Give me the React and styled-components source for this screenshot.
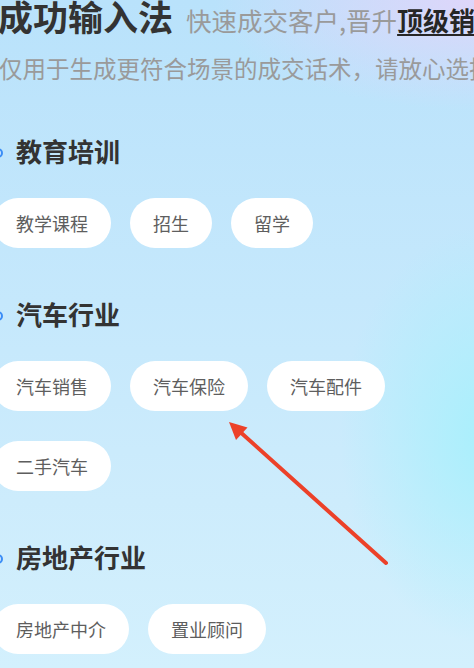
import React from "react";
import styled, { createGlobalStyle } from "styled-components";

const Global = createGlobalStyle`
  html, body { margin: 0; padding: 0; }
  body {
    font-family: "Noto Sans CJK SC", "Noto Sans", sans-serif;
    overflow: hidden;
  }
`;

const Page = styled.div`
  position: relative;
  width: 474px;
  height: 668px;
  overflow: hidden;
  background:
    radial-gradient(ellipse 150px 210px at 490px 435px, rgba(166, 240, 252, 0.95), rgba(166, 240, 252, 0) 100%),
    radial-gradient(ellipse 260px 110px at 474px 0px, rgba(222, 214, 250, 1), rgba(222, 214, 250, 0) 100%),
    linear-gradient(180deg, #b9e2fb 0%, #c5e8fc 45%, #cdecfc 75%, #d3f0fd 100%);
`;

const Header = styled.header`
  margin-left: -2px;
  white-space: nowrap;
`;

const TitleRow = styled.div`
  display: flex;
  align-items: baseline;
  white-space: nowrap;
`;

const Title = styled.h1`
  margin: 0;
  font-size: 35px;
  line-height: 32px;
  font-weight: 700;
  color: #333333;
  flex: none;
`;

const Slogan = styled.span`
  margin-left: 13px;
  font-size: 25.5px;
  line-height: 32px;
  color: #9a9a9a;
  flex: none;
`;

const Highlight = styled.span`
  font-size: 26px;
  line-height: 32px;
  font-weight: 700;
  color: #262626;
  text-decoration: underline;
  text-decoration-thickness: 2px;
  text-underline-offset: 3px;
  flex: none;
`;

const Subline = styled.p`
  margin: 17px 0 0 1px;
  font-size: 23.5px;
  line-height: 30px;
  color: #9a9a9a;
  white-space: nowrap;
`;

const Sections = styled.main`
  margin: 53px 0 0 -7px;
  display: flex;
  flex-direction: column;
  gap: 51px;
`;

const Section = styled.section`
  display: flex;
  flex-direction: column;
  gap: 32px;
`;

const Heading = styled.h2`
  margin: 0;
  height: 30px;
  display: flex;
  align-items: center;
  gap: 13px;
  font-size: 26px;
  line-height: 30px;
  font-weight: 700;
  color: #333333;
`;

const Dot = styled.span`
  box-sizing: border-box;
  width: 10px;
  height: 10px;
  margin-top: 3px;
  border-radius: 50%;
  border: 2.5px solid #3a8df6;
  background: #cfe8ff;
  flex: none;
`;

const Chips = styled.div`
  display: flex;
  flex-wrap: wrap;
  gap: 30px 19px;
`;

const Chip = styled.button`
  box-sizing: border-box;
  height: 50px;
  padding: 0 23px;
  border: none;
  border-radius: 25px;
  background: #ffffff;
  font-family: "Noto Sans CJK SC", "Noto Sans", sans-serif;
  font-size: 18px;
  line-height: 50px;
  color: #5e5e5e;
  cursor: pointer;
`;

const Arrow = styled.svg`
  position: absolute;
  left: 0;
  top: 0;
  pointer-events: none;
`;

const sections = [
  { title: "教育培训", items: ["教学课程", "招生", "留学"] },
  { title: "汽车行业", items: ["汽车销售", "汽车保险", "汽车配件", "二手汽车"] },
  { title: "房地产行业", items: ["房地产中介", "置业顾问"] },
];

export default function App() {
  return (
    <>
      <Global />
      <Page>
        <Header>
          <TitleRow>
            <Title>成功输入法</Title>
            <Slogan>快速成交客户,晋升</Slogan>
            <Highlight>顶级销冠</Highlight>
          </TitleRow>
          <Subline>仅用于生成更符合场景的成交话术，请放心选择</Subline>
        </Header>
        <Sections>
          {sections.map((s) => (
            <Section key={s.title}>
              <Heading>
                <Dot />
                {s.title}
              </Heading>
              <Chips>
                {s.items.map((it) => (
                  <Chip key={it}>{it}</Chip>
                ))}
              </Chips>
            </Section>
          ))}
        </Sections>
        <Arrow width="474" height="668" viewBox="0 0 474 668">
          <line x1="386" y1="563" x2="238" y2="430" stroke="#ec4129" strokeWidth="4" strokeLinecap="round" />
          <polygon points="229,422 247.5,427.5 236,440" fill="#ec4129" />
        </Arrow>
      </Page>
    </>
  );
}
